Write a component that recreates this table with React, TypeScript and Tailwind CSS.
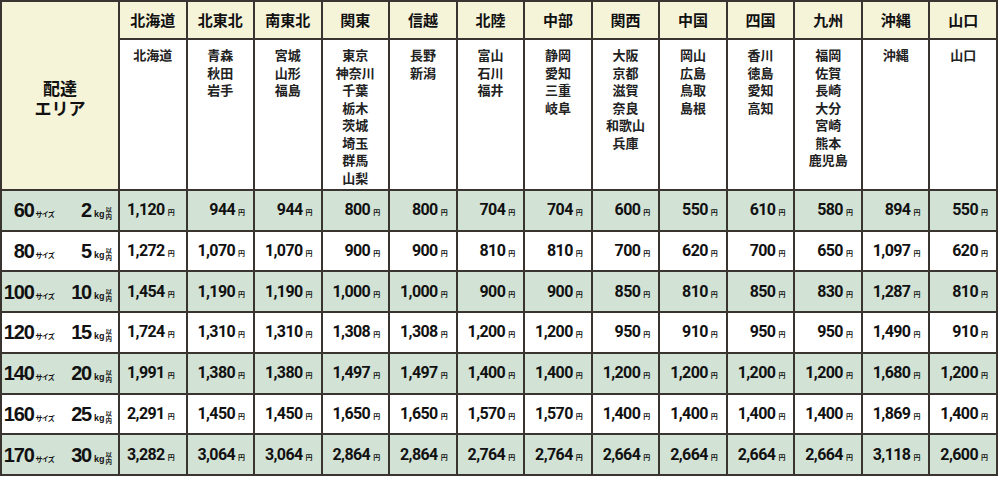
import React from 'react';

const areas = [
  { name: '北海道', prefs: ['北海道'] },
  { name: '北東北', prefs: ['青森', '秋田', '岩手'] },
  { name: '南東北', prefs: ['宮城', '山形', '福島'] },
  { name: '関東', prefs: ['東京', '神奈川', '千葉', '栃木', '茨城', '埼玉', '群馬', '山梨'] },
  { name: '信越', prefs: ['長野', '新潟'] },
  { name: '北陸', prefs: ['富山', '石川', '福井'] },
  { name: '中部', prefs: ['静岡', '愛知', '三重', '岐阜'] },
  { name: '関西', prefs: ['大阪', '京都', '滋賀', '奈良', '和歌山', '兵庫'] },
  { name: '中国', prefs: ['岡山', '広島', '鳥取', '島根'] },
  { name: '四国', prefs: ['香川', '徳島', '愛知', '高知'] },
  { name: '九州', prefs: ['福岡', '佐賀', '長崎', '大分', '宮崎', '熊本', '鹿児島'] },
  { name: '沖縄', prefs: ['沖縄'] },
  { name: '山口', prefs: ['山口'] },
];

const rows = [
  { size: '60', kg: '2', prices: ['1,120', '944', '944', '800', '800', '704', '704', '600', '550', '610', '580', '894', '550'] },
  { size: '80', kg: '5', prices: ['1,272', '1,070', '1,070', '900', '900', '810', '810', '700', '620', '700', '650', '1,097', '620'] },
  { size: '100', kg: '10', prices: ['1,454', '1,190', '1,190', '1,000', '1,000', '900', '900', '850', '810', '850', '830', '1,287', '810'] },
  { size: '120', kg: '15', prices: ['1,724', '1,310', '1,310', '1,308', '1,308', '1,200', '1,200', '950', '910', '950', '950', '1,490', '910'] },
  { size: '140', kg: '20', prices: ['1,991', '1,380', '1,380', '1,497', '1,497', '1,400', '1,400', '1,200', '1,200', '1,200', '1,200', '1,680', '1,200'] },
  { size: '160', kg: '25', prices: ['2,291', '1,450', '1,450', '1,650', '1,650', '1,570', '1,570', '1,400', '1,400', '1,400', '1,400', '1,869', '1,400'] },
  { size: '170', kg: '30', prices: ['3,282', '3,064', '3,064', '2,864', '2,864', '2,764', '2,764', '2,664', '2,664', '2,664', '2,664', '3,118', '2,600'] },
];

const jp = { fontFamily: '"Noto Sans CJK JP", "Noto Sans", sans-serif' };
const num = { fontFamily: '"Liberation Sans", Arial, sans-serif' };

const SizeLabel = ({ size, kg }: { size: string; kg: string }) => (
  <div className="flex items-center h-full text-[#111] whitespace-nowrap">
    <div className="w-[52px] shrink-0 flex justify-end items-baseline">
      <span className="text-[20px] font-bold tracking-[-1.2px] leading-none" style={num}>{size}</span>
      <span className="text-[7px] font-bold ml-[2px] leading-none tracking-[-0.8px]" style={jp}>サイズ</span>
    </div>
    <div className="w-[58px] shrink-0 flex justify-end items-baseline">
      <span className="text-[20px] font-bold tracking-[-1.2px] leading-none" style={num}>{kg}</span>
      <span className="text-[9px] font-bold ml-[3px] leading-none" style={num}>kg</span>
      <span className="flex flex-col items-center text-[6.5px] font-bold leading-[7px] ml-[1px] self-end" style={jp}>
        <span>以</span>
        <span>内</span>
      </span>
    </div>
  </div>
);

export default function App() {
  return (
    <div className="w-[1000px] h-[478px] bg-white">
      <div
        className="w-[998px] h-[476px] bg-[#3a3431] p-[2px] grid gap-[2px] grid-cols-[116px_repeat(13,1fr)] grid-rows-[36px_149px_repeat(7,1fr)]"
        style={jp}
      >
        <div className="row-span-2 bg-[#f5f3d8] flex items-center justify-center text-center text-[17px] font-bold leading-[20px] text-[#111] pt-[4px]">
          配達<br />エリア
        </div>
        {areas.map((a) => (
          <div key={a.name} className="bg-[#f5f3d8] flex items-center justify-center text-[15px] font-bold text-[#111]">
            {a.name}
          </div>
        ))}
        {areas.map((a) => (
          <div key={a.name + '-p'} className="bg-white flex flex-col items-center pt-[6px] text-[13px] font-bold leading-[17.5px] text-[#222]">
            {a.prefs.map((p, i) => (
              <span key={i}>{p}</span>
            ))}
          </div>
        ))}
        {rows.map((r, ri) => {
          const bg = ri % 2 === 0 ? 'bg-[#d2e3d6]' : 'bg-white';
          return (
            <React.Fragment key={r.size}>
              <div className={bg}>
                <SizeLabel size={r.size} kg={r.kg} />
              </div>
              {r.prices.map((p, ci) => (
                <div
                  key={ci}
                  className={`${bg} flex items-center ${ci === 0 ? 'justify-start pl-[7px]' : 'justify-end pr-[8px]'} text-[#111]`}
                >
                  <span className="flex items-baseline whitespace-nowrap">
                    <span className="text-[16px] font-bold tracking-[-0.6px]" style={{ fontFamily: 'Roboto, sans-serif' }}>{p}</span>
                    <span className="text-[7px] font-bold ml-[3px]" style={jp}>円</span>
                  </span>
                </div>
              ))}
            </React.Fragment>
          );
        })}
      </div>
    </div>
  );
}
